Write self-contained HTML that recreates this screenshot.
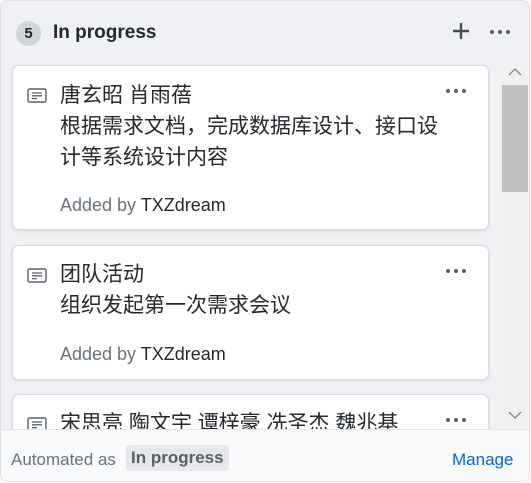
<!DOCTYPE html>
<html><head><meta charset="utf-8"><style>
*{box-sizing:border-box;margin:0;padding:0}
body{width:531px;height:483px;background:#fff;font-family:"Liberation Sans","Noto Sans CJK SC",sans-serif;overflow:hidden;position:relative}
.panel{position:absolute;left:0;top:0;width:530px;height:482px;background:#eff1f4;border:1px solid #dfe2e5;border-radius:7px;overflow:hidden}
.cnt{position:absolute;left:15px;top:20px;width:25px;height:25px;border-radius:13px;background:#d1d5da;font-size:15px;font-weight:bold;color:#24292e;text-align:center;line-height:25px}
.h{position:absolute;left:52px;top:21px;font-size:19px;font-weight:bold;color:#24292e}
.plus{position:absolute;left:450px;top:20px;width:20px;height:20px}
.card{position:absolute;left:11px;width:477px;background:#fff;border:1px solid #d8dce0;border-radius:7px;box-shadow:0 1px 3px rgba(0,0,0,.12)}
.ic{position:absolute;left:14px;top:22px}
.t{position:absolute;left:47px;font-size:21px;color:#24292e;line-height:31px;width:385px}
.a{position:absolute;left:47px;font-size:18px;color:#6a737d}
.a b{font-weight:normal;color:#24292e}
.sb{position:absolute;left:500px;top:61px;width:28px;height:367px;background:#f0f0f0}
.th{position:absolute;left:501px;top:84px;width:26px;height:107px;background:#c1c1c1}
.foot{position:absolute;left:0;top:428px;width:530px;height:54px;background:#f9fafb;border-top:1px solid #e1e4e8}
</style></head><body>
<div class="panel">
<div class="cnt">5</div>
<div class="h">In progress</div>
<svg class="plus" viewBox="0 0 20 20"><path d="M10 2v16M2 10h16" stroke="#444d56" stroke-width="2.4"/></svg>
<svg style="position:absolute;left:488px;top:28px" width="22" height="6"><circle cx="3" cy="3" r="2" fill="#586069"/><circle cx="11" cy="3" r="2" fill="#586069"/><circle cx="19" cy="3" r="2" fill="#586069"/></svg>

<div class="card" style="top:64px;height:165px">
<svg class="ic" width="20" height="15" viewBox="0 0 20 15"><rect x="1" y="1" width="18" height="13" rx="1.5" fill="none" stroke="#586069" stroke-width="1.4"/><path d="M5 5h10M5 7.8h10M5 10.6h5" stroke="#586069" stroke-width="1.3"/></svg>
<svg style="position:absolute;left:432px;top:22px" width="22" height="6"><circle cx="3" cy="3" r="2" fill="#586069"/><circle cx="11" cy="3" r="2" fill="#586069"/><circle cx="19" cy="3" r="2" fill="#586069"/></svg>
<div class="t" style="top:14px">唐玄昭 肖雨蓓<br>根据需求文档，完成数据库设计、接口设计等系统设计内容</div>
<div class="a" style="top:129px">Added by <b>TXZdream</b></div>
</div>

<div class="card" style="top:244px;height:135px">
<svg class="ic" width="20" height="15" viewBox="0 0 20 15"><rect x="1" y="1" width="18" height="13" rx="1.5" fill="none" stroke="#586069" stroke-width="1.4"/><path d="M5 5h10M5 7.8h10M5 10.6h5" stroke="#586069" stroke-width="1.3"/></svg>
<svg style="position:absolute;left:432px;top:22px" width="22" height="6"><circle cx="3" cy="3" r="2" fill="#586069"/><circle cx="11" cy="3" r="2" fill="#586069"/><circle cx="19" cy="3" r="2" fill="#586069"/></svg>
<div class="t" style="top:13px">团队活动<br>组织发起第一次需求会议</div>
<div class="a" style="top:98px">Added by <b>TXZdream</b></div>
</div>

<div class="card" style="top:393px;height:80px">
<svg class="ic" width="20" height="15" viewBox="0 0 20 15"><rect x="1" y="1" width="18" height="13" rx="1.5" fill="none" stroke="#586069" stroke-width="1.4"/><path d="M5 5h10M5 7.8h10M5 10.6h5" stroke="#586069" stroke-width="1.3"/></svg>
<svg style="position:absolute;left:432px;top:22px" width="22" height="6"><circle cx="3" cy="3" r="2" fill="#586069"/><circle cx="11" cy="3" r="2" fill="#586069"/><circle cx="19" cy="3" r="2" fill="#586069"/></svg>
<div class="t" style="top:13px;width:420px">宋思亮 陶文宇 谭梓豪 冼圣杰 魏兆基</div>
</div>

<div class="sb"></div>
<div class="th"></div>
<svg style="position:absolute;left:507px;top:66px" width="14" height="9"><path d="M1 8l6-6 6 6" fill="none" stroke="#777" stroke-width="1.2"/></svg>
<svg style="position:absolute;left:507px;top:410px" width="14" height="9"><path d="M1 1l6 6 6-6" fill="none" stroke="#777" stroke-width="1.2"/></svg>

<div class="foot">
<div style="position:absolute;left:10px;top:20px;font-size:17px;color:#6a737d">Automated as</div>
<div style="position:absolute;left:125px;top:15px;height:26px;padding:0 5px;background:#e6e8eb;border-radius:3px;font-size:17px;font-weight:bold;color:#586069;line-height:26px">In progress</div>
<div style="position:absolute;left:451px;top:20px;font-size:17px;color:#0366d6">Manage</div>
</div>
</div>
</body></html>
